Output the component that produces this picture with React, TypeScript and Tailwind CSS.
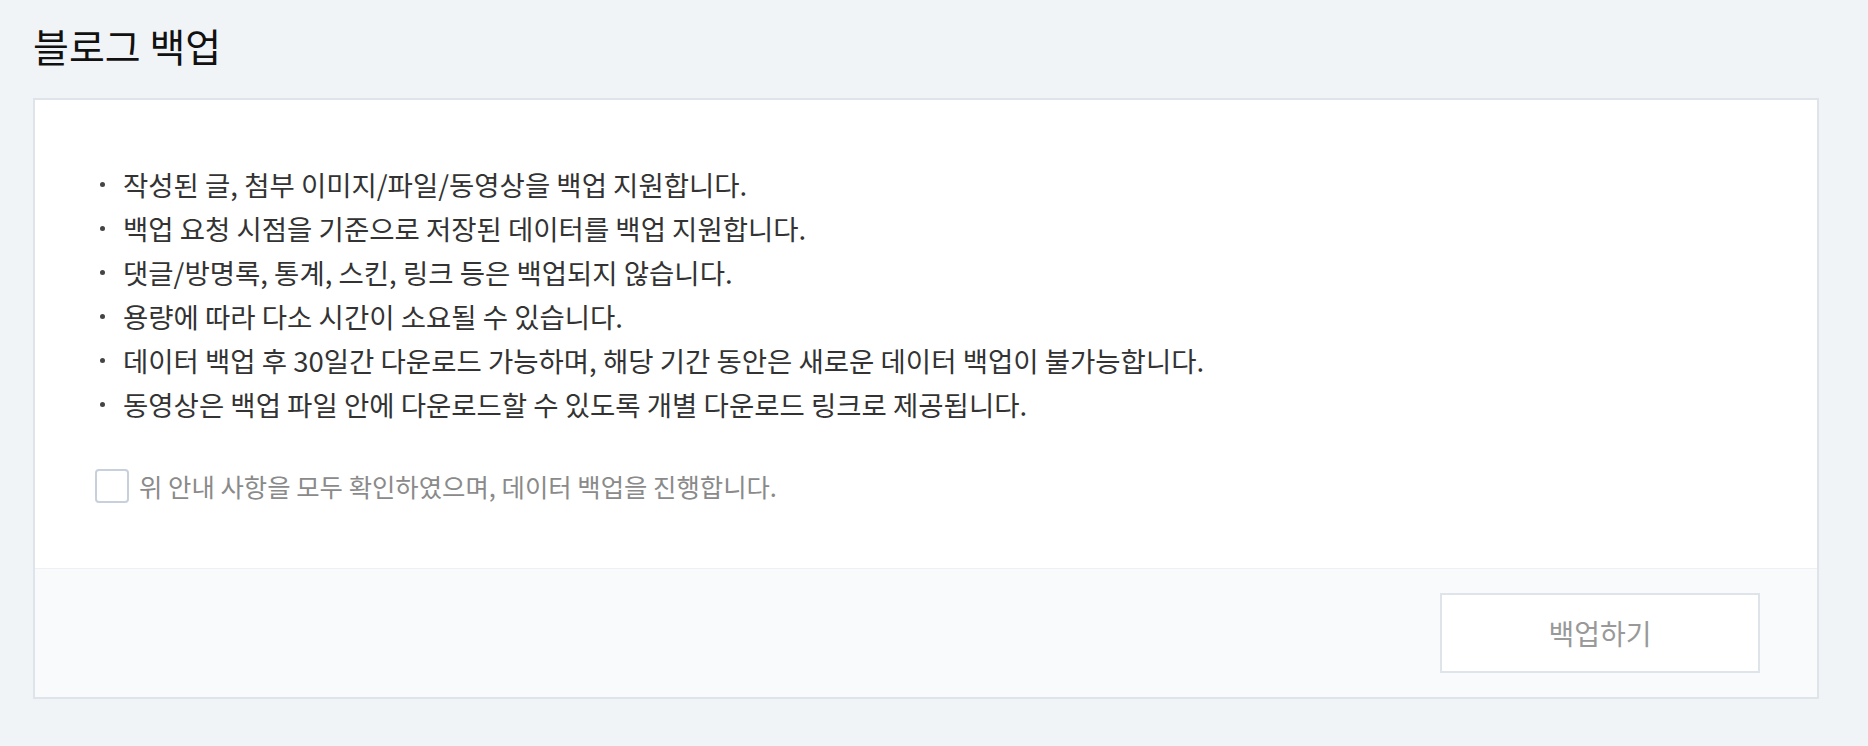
import { useState } from "react";

const notices = [
  "작성된 글, 첨부 이미지/파일/동영상을 백업 지원합니다.",
  "백업 요청 시점을 기준으로 저장된 데이터를 백업 지원합니다.",
  "댓글/방명록, 통계, 스킨, 링크 등은 백업되지 않습니다.",
  "용량에 따라 다소 시간이 소요될 수 있습니다.",
  "데이터 백업 후 30일간 다운로드 가능하며, 해당 기간 동안은 새로운 데이터 백업이 불가능합니다.",
  "동영상은 백업 파일 안에 다운로드할 수 있도록 개별 다운로드 링크로 제공됩니다.",
];

export default function App() {
  const [agreed, setAgreed] = useState(false);

  return (
    <div
      className="min-h-screen bg-[#f1f4f7] pl-[33px] pr-[49px] pt-[17px] pb-12"
      style={{ fontFamily: '"Noto Sans CJK KR", "Noto Sans", sans-serif' }}
    >
      <h1 className="text-[39px] leading-[56px] text-[#111] font-normal">블로그 백업</h1>

      {/* backup card */}
      <div className="mt-[25px] border-2 border-[#dfe4eb] bg-white">
        <div className="pt-[62px] pb-[63px] pl-[63px]">
          <ul className="text-[27.5px] leading-[44px] text-[#333]">
            {notices.map((n) => (
              <li key={n} className="flex items-center">
                <span className="w-[25px] shrink-0">
                  <span className="block w-[5px] h-[5px] rounded-full bg-[#444] ml-[2px]" />
                </span>
                {n}
              </li>
            ))}
          </ul>

          <label className="mt-[41px] flex items-center gap-[10px] cursor-pointer">
            <input
              type="checkbox"
              checked={agreed}
              onChange={(e) => setAgreed(e.target.checked)}
              className="peer sr-only"
            />
            <span className="w-[34px] h-[34px] rounded-[4px] border-2 border-[#c8d0db] bg-white -ml-[3px]" />
            <span className="text-[25.4px] text-[#8a8a8a]">
              위 안내 사항을 모두 확인하였으며, 데이터 백업을 진행합니다.
            </span>
          </label>
        </div>

        <div className="border-t border-[#edf0f4] bg-[#f8fafc] flex justify-end py-[24px] pr-[57px]">
          <button
            disabled={!agreed}
            className="w-[320px] h-[80px] border-2 border-[#dfe4eb] bg-white text-[28px] text-[#999]"
          >
            백업하기
          </button>
        </div>
      </div>
    </div>
  );
}
